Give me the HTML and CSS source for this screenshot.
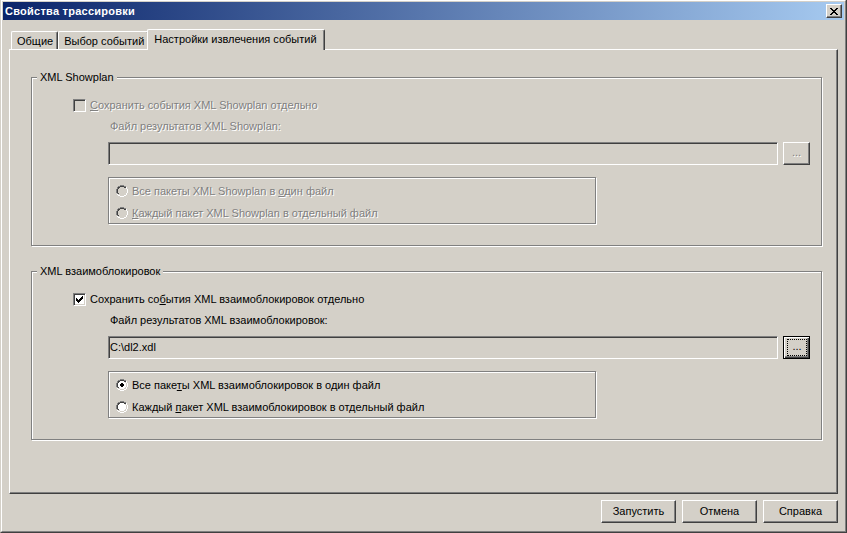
FILE: index.html
```html
<!DOCTYPE html>
<html lang="ru">
<head>
<meta charset="utf-8">
<title>Свойства трассировки</title>
<link rel="stylesheet" href="styles.css">
</head>
<body>
<svg class="defs" width="0" height="0" aria-hidden="true">
  <defs>
    <symbol id="radio" viewBox="0 0 12 12">
      <path fill="currentColor" d="M4 2h4v1H4zM3 3h6v1H3zM2 4h8v4H2zM3 8h6v1H3zM4 9h4v1H4z"/>
      <path fill="#808080" d="M4 0h4v1H4zM2 1h2v1H2zM8 1h2v1H8zM1 2h1v2H1zM0 4h1v4H0zM1 8h1v1H1z"/>
      <path fill="#404040" d="M4 1h4v1H4zM2 2h2v1H2zM8 2h2v1H8zM2 3h1v1H2zM1 4h1v4H1zM2 8h1v1H2z"/>
      <path fill="#ffffff" d="M10 2h1v2h-1zM11 4h1v4h-1zM10 8h1v2h-1zM1 9h1v1H1zM2 10h2v1H2zM8 10h2v1H8zM4 11h4v1H4z"/>
    </symbol>
    <symbol id="dot" viewBox="0 0 12 12">
      <path fill="#000" d="M5 4h2v1H5zM4 5h4v2H4zM5 7h2v1H5z"/>
    </symbol>
    <symbol id="check" viewBox="0 0 7 7">
      <path fill="#000" d="M6 0h1v1H6zM5 1h2v1H5zM0 2h1v1H0zM4 2h3v1H4zM0 3h2v1H0zM3 3h3v1H3zM0 4h5v1H0zM1 5h3v1H1zM2 6h1v1H2z"/>
    </symbol>
  </defs>
</svg>

<div class="window">
  <div class="frame">
    <div class="titlebar">
      <span class="title">Свойства трассировки</span>
      <span class="close-btn">
        <svg viewBox="0 0 8 7" width="8" height="7" shape-rendering="crispEdges"><path fill="#000" d="M0 0h2v1H0zM6 0h2v1H6zM1 1h2v1H1zM5 1h2v1H5zM2 2h4v1H2zM3 3h2v1H3zM2 4h4v1H2zM1 5h2v1H1zM5 5h2v1H5zM0 6h2v1H0zM6 6h2v1H6z"/></svg>
      </span>
    </div>

    <div class="client">
      <div class="tabs">
        <div class="tab">Общие</div>
        <div class="tab">Выбор событий</div>
        <div class="tab tab-active">Настройки извлечения событий</div>
      </div>

      <div class="panel">
        <div class="group">
          <div class="group-title">XML Showplan</div>
          <div class="group-body">
            <div class="check-row disabled">
              <span class="checkbox checkbox-disabled"></span>
              <span><u>С</u>охранить события XML Showplan отдельно</span>
            </div>
            <div class="field-label disabled">Файл результатов XML Showplan:</div>
            <div class="field-row">
              <div class="field"></div>
              <div class="btn btn-browse disabled">...</div>
            </div>
            <div class="radio-box">
              <div class="radio-row disabled">
                <svg class="radio radio-disabled" viewBox="0 0 12 12" shape-rendering="crispEdges"><use href="#radio"/></svg>
                <span>Все пакеты XML Showplan в <u>о</u>дин файл</span>
              </div>
              <div class="radio-row disabled">
                <svg class="radio radio-disabled" viewBox="0 0 12 12" shape-rendering="crispEdges"><use href="#radio"/></svg>
                <span><u>К</u>аждый пакет XML Showplan в отдельный файл</span>
              </div>
            </div>
          </div>
        </div>

        <div class="group">
          <div class="group-title">XML взаимоблокировок</div>
          <div class="group-body">
            <div class="check-row">
              <span class="checkbox"><svg viewBox="0 0 7 7" shape-rendering="crispEdges"><use href="#check"/></svg></span>
              <span>Сохранить со<u>б</u>ытия XML взаимоблокировок отдельно</span>
            </div>
            <div class="field-label">Файл результатов XML взаимоблокировок:</div>
            <div class="field-row">
              <div class="field">C:\dl2.xdl</div>
              <div class="btn btn-browse btn-focus"><span class="focus-rect">...</span></div>
            </div>
            <div class="radio-box">
              <div class="radio-row">
                <svg class="radio" viewBox="0 0 12 12" shape-rendering="crispEdges"><use href="#radio"/><use href="#dot"/></svg>
                <span>Все паке<u>т</u>ы XML взаимоблокировок в один файл</span>
              </div>
              <div class="radio-row">
                <svg class="radio" viewBox="0 0 12 12" shape-rendering="crispEdges"><use href="#radio"/></svg>
                <span>Каждый <u>п</u>акет XML взаимоблокировок в отдельный файл</span>
              </div>
            </div>
          </div>
        </div>
      </div>

      <div class="buttons">
        <div class="btn">Запустить</div>
        <div class="btn">Отмена</div>
        <div class="btn">Справка</div>
      </div>
    </div>
  </div>
</div>
</body>
</html>
```

FILE: styles.css
```css
* {
  box-sizing: border-box;
}

html,
body {
  margin: 0;
  padding: 0;
}

body {
  width: 847px;
  height: 533px;
  overflow: hidden;
  background: #d4d0c8;
  font-family: "Liberation Sans", Arial, sans-serif;
  font-size: 11px;
  color: #000;
}

.defs {
  position: absolute;
  width: 0;
  height: 0;
  overflow: hidden;
}

u {
  text-decoration: underline;
  text-underline-offset: 1px;
}

/* window frame */
.window {
  width: 847px;
  height: 533px;
  border-style: solid;
  border-width: 0 1px 1px 1px;
  border-color: #d4d0c8 #404040 #404040 #d4d0c8;
  background: #d4d0c8;
}

.frame {
  height: 100%;
  border: 1px solid;
  border-color: #fff #808080 #808080 #fff;
  padding: 1px;
  display: flex;
  flex-direction: column;
}

.titlebar {
  flex: none;
  height: 18px;
  display: flex;
  align-items: center;
  justify-content: space-between;
  padding: 0 2px 0 2px;
  background: linear-gradient(to right, #0a246a, #a6caf0);
}

.title {
  color: #fff;
  font-weight: bold;
  line-height: 13px;
  letter-spacing: 0.25px;
}

.close-btn {
  width: 16px;
  height: 14px;
  padding: 3px 0 0 3px;
  background: #d4d0c8;
  border: 1px solid;
  border-color: #fff #404040 #404040 #fff;
  box-shadow: inset -1px -1px #808080;
}

.close-btn svg {
  display: block;
}

/* client */
.client {
  flex: 1;
  padding: 0 6px;
  display: flex;
  flex-direction: column;
}

.tabs {
  flex: none;
  display: flex;
  align-items: flex-end;
  height: 20px;
  margin: 9px 0 0 2px;
  position: relative;
  z-index: 1;
}

.tab {
  height: 18px;
  padding: 2px 4px 0 5px;
  line-height: 14px;
  white-space: nowrap;
  background: #d4d0c8;
  border-top: 1px solid #fff;
  border-left: 1px solid #fff;
  border-right: 1px solid #404040;
  border-radius: 2px 2px 0 0;
  box-shadow: inset -1px 0 #808080;
}

.tab-active {
  height: 21px;
  margin: 0 -2px -1px -2px;
  padding: 2px 7px 0 6px;
  position: relative;
}

.panel {
  flex: none;
  height: 445px;
  border: 1px solid;
  border-color: #fff #404040 #404040 #fff;
  box-shadow: inset -1px -1px #808080;
  padding: 27px 0 0 21px;
}

/* group boxes */
.group {
  width: 791px;
  height: 169px;
  border: 1px solid #808080;
  box-shadow: inset 1px 1px #fff, 1px 1px #fff;
}

.group + .group {
  margin-top: 25px;
}

.group-title {
  width: fit-content;
  margin: -7px 0 0 5px;
  padding: 0 3px;
  line-height: 13px;
  background: #d4d0c8;
}

.group-body {
  padding-left: 41px;
}

.disabled {
  color: #808080;
  text-shadow: 1px 1px 0 #fff;
}

.check-row {
  display: flex;
  align-items: center;
  gap: 4px;
  height: 13px;
  margin-top: 15px;
  line-height: 13px;
}

.checkbox {
  flex: none;
  width: 13px;
  height: 13px;
  padding: 2px;
  background: #fff;
  border: 1px solid;
  border-color: #808080 #fff #fff #808080;
  box-shadow: inset 1px 1px #404040, inset -1px -1px #d4d0c8;
}

.checkbox svg {
  display: block;
  width: 7px;
  height: 7px;
}

.checkbox-disabled {
  background: #d4d0c8;
}

.field-label {
  margin: 8px 0 0 37px;
  line-height: 13px;
}

.field-row {
  display: flex;
  gap: 5px;
  margin: 9px 0 0 35px;
}

.field {
  width: 670px;
  height: 23px;
  padding-left: 1px;
  line-height: 21px;
  background: #d4d0c8;
  border: 1px solid;
  border-color: #808080 #fff #fff #808080;
  box-shadow: inset 1px 1px #404040, inset -1px -1px #d4d0c8;
  white-space: nowrap;
}

.btn {
  width: 75px;
  height: 23px;
  display: flex;
  align-items: center;
  justify-content: center;
  line-height: 13px;
  background: #d4d0c8;
  border: 1px solid;
  border-color: #fff #404040 #404040 #fff;
  box-shadow: inset -1px -1px #808080;
}

.btn-browse {
  width: 27px;
  padding-bottom: 3px;
}

.btn-focus {
  border-color: #000;
  padding: 2px 2px 2px 3px;
  box-shadow: inset 1px 1px #fff, inset -1px -1px #404040, inset -2px -2px #808080;
}

.focus-rect {
  flex: 1;
  align-self: stretch;
  display: flex;
  align-items: center;
  justify-content: center;
  padding-bottom: 3px;
  border: 1px dotted #000;
}

.radio-box {
  width: 488px;
  height: 47px;
  margin: 12px 0 0 35px;
  padding: 6px 0 0 7px;
  display: flex;
  flex-direction: column;
  gap: 8px;
  border: 1px solid #808080;
  box-shadow: inset 1px 1px #fff, 1px 1px #fff;
}

.radio-row {
  display: flex;
  align-items: center;
  gap: 4px;
  height: 14px;
  line-height: 13px;
}

.radio {
  flex: none;
  display: block;
  width: 12px;
  height: 12px;
  color: #fff;
}

.radio-disabled {
  color: #d4d0c8;
}

/* bottom buttons */
.buttons {
  display: flex;
  justify-content: flex-end;
  gap: 6px;
  margin-top: 6px;
}
```
